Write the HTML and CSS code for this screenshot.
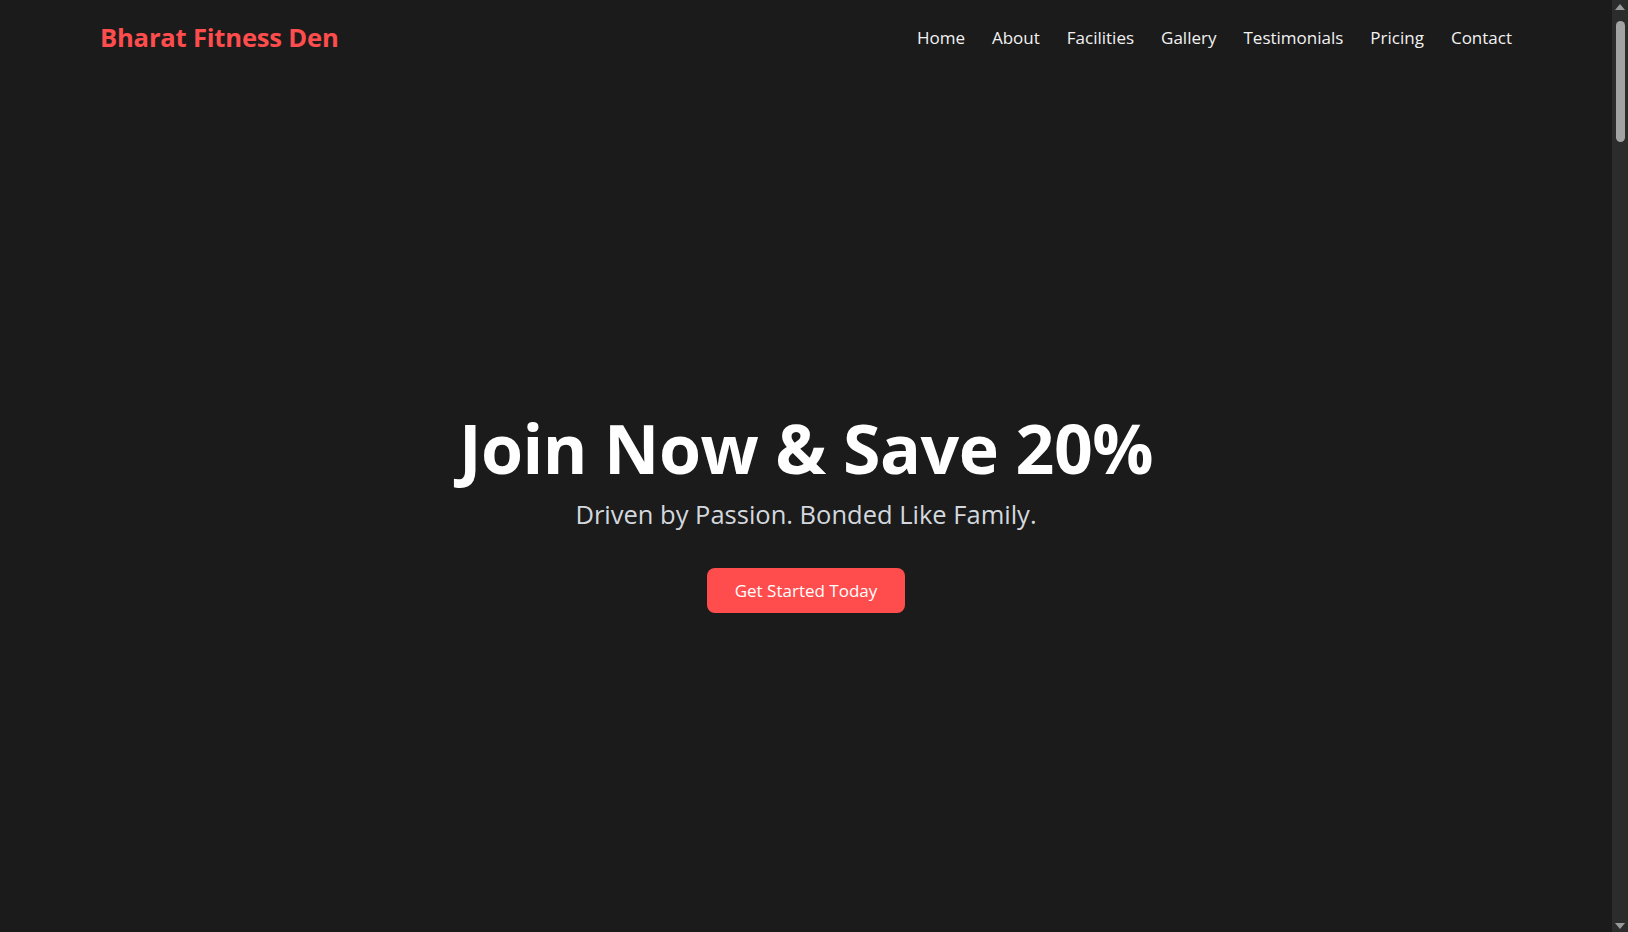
FILE: index.html
```html
<!DOCTYPE html>
<html lang="en">
<head>
<meta charset="UTF-8">
<title>Bharat Fitness Den</title>
<link rel="stylesheet" href="styles.css">
</head>
<body>
<div class="page">
  <header class="site-header">
    <a class="logo" href="#home">Bharat Fitness Den</a>
    <nav class="nav">
      <a href="#home">Home</a>
      <a href="#about">About</a>
      <a href="#facilities">Facilities</a>
      <a href="#gallery">Gallery</a>
      <a href="#testimonials">Testimonials</a>
      <a href="#pricing">Pricing</a>
      <a href="#contact">Contact</a>
    </nav>
  </header>

  <section class="hero" id="home">
    <h1 class="hero-title">Join Now &amp; Save 20%</h1>
    <p class="hero-sub">Driven by Passion. Bonded Like Family.</p>
    <a class="btn" href="#contact">Get Started Today</a>
  </section>
</div>

<div class="scrollbar" aria-hidden="true">
  <span class="sb-arrow sb-up"></span>
  <div class="sb-track">
    <span class="sb-thumb"></span>
  </div>
  <span class="sb-arrow sb-down"></span>
</div>
</body>
</html>
```

FILE: styles.css
```css
html {
  color-scheme: dark;
}

body {
  margin: 0;
  height: 100vh;
  overflow: hidden;
  display: flex;
  background: #1b1b1b;
  color: #ffffff;
  font-family: "Open Sans", "Noto Sans", sans-serif;
}

a {
  text-decoration: none;
  color: inherit;
}

.page {
  flex: 1;
  display: flex;
  flex-direction: column;
  min-width: 0;
}

.site-header {
  display: flex;
  justify-content: space-between;
  align-items: center;
  padding: 20px 100px;
  height: 35px;
}

.logo {
  color: #ff4d4d;
  font-size: 25.6px;
  font-weight: 700;
  line-height: 35px;
  letter-spacing: -0.2px;
}

.nav {
  display: flex;
  gap: 27px;
}

.nav a {
  color: #f2f2f2;
  font-size: 17px;
  line-height: 24px;
}

.hero {
  flex: 1;
  padding-top: 11px;
  display: flex;
  flex-direction: column;
  align-items: center;
  justify-content: center;
  text-align: center;
}

.hero-title {
  margin: 0;
  font-size: 68px;
  line-height: 86px;
  font-weight: 700;
  letter-spacing: -0.5px;
  color: #ffffff;
}

.hero-sub {
  margin: 2px 0 0;
  font-size: 25.5px;
  line-height: 43px;
  color: #d3d8de;
}

.btn {
  margin-top: 32px;
  display: inline-block;
  background: #ff4d4d;
  color: #ffffff;
  font-size: 17px;
  line-height: 25px;
  padding: 10px 28px;
  border-radius: 8px;
}

/* page scrollbar (browser chrome in the reference) */
.scrollbar {
  width: 16px;
  flex: none;
  background: #2c2c2c;
  display: flex;
  flex-direction: column;
  align-items: center;
  padding: 4px 0 3px;
  box-sizing: border-box;
}

.sb-arrow {
  width: 0;
  height: 0;
  border-left: 5px solid transparent;
  border-right: 5px solid transparent;
}

.sb-up {
  border-bottom: 6px solid #9a9a9a;
}

.sb-down {
  border-top: 6px solid #9a9a9a;
}

.sb-track {
  flex: 1;
  width: 100%;
  display: flex;
  justify-content: center;
  padding-top: 11px;
}

.sb-thumb {
  width: 9px;
  height: 121px;
  border-radius: 5px;
  background: #a3a3a3;
}
```
